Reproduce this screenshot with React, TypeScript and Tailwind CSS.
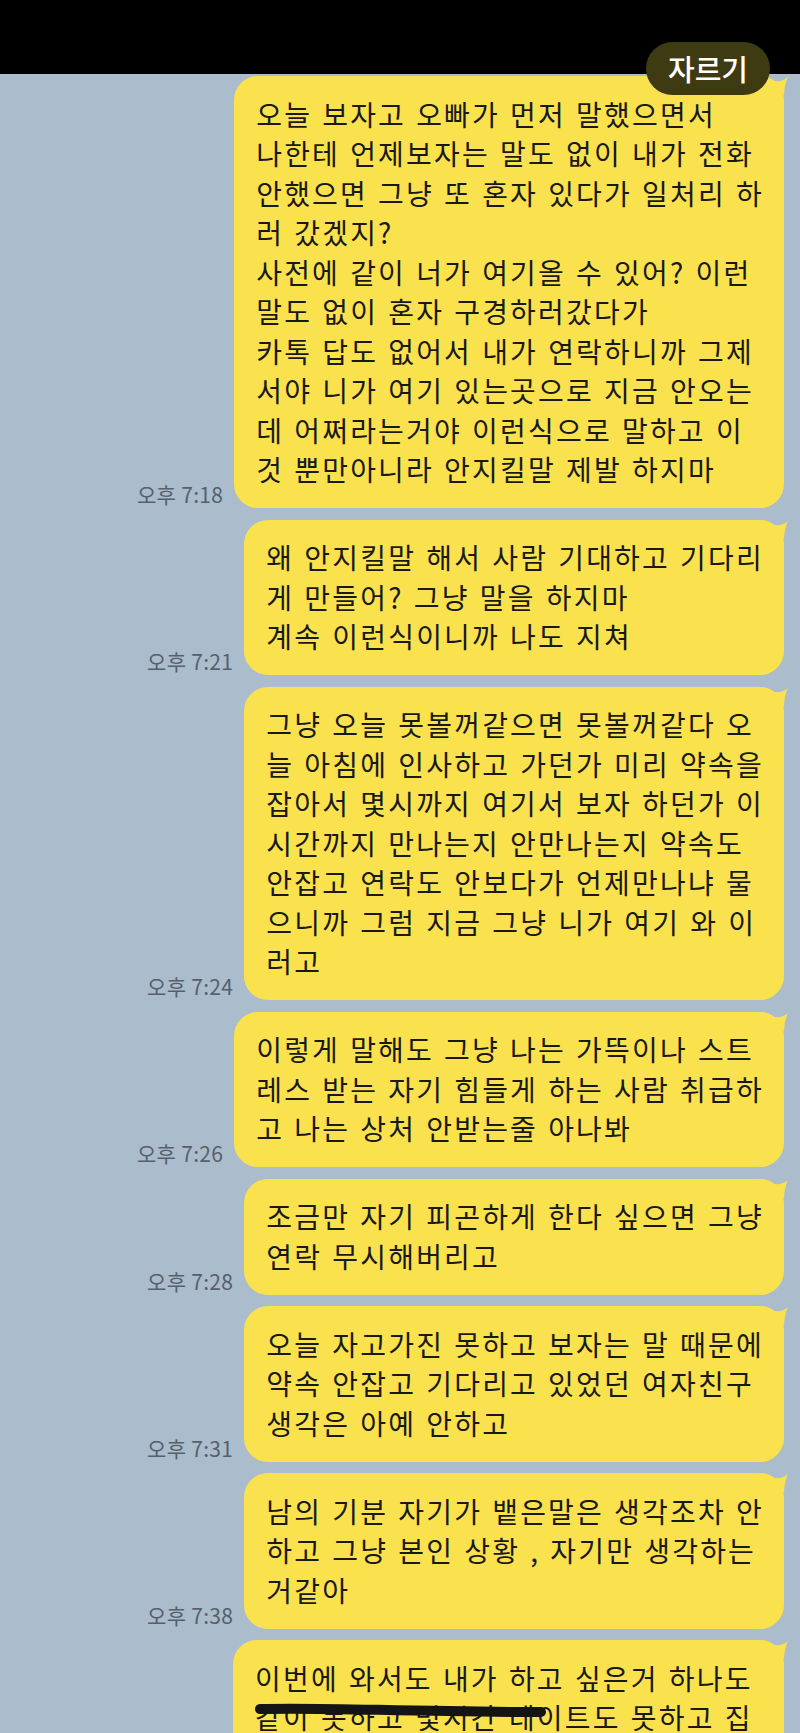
import React from 'react'

type Message = {
  lines: string[]
  time?: string
}

const messages: Message[] = [
  {
    time: '오후 7:18',
    lines: [
      '오늘 보자고 오빠가 먼저 말했으면서',
      '나한테 언제보자는 말도 없이 내가 전화',
      '안했으면 그냥 또 혼자 있다가 일처리 하',
      '러 갔겠지?',
      '사전에 같이 너가 여기올 수 있어? 이런',
      '말도 없이 혼자 구경하러갔다가',
      '카톡 답도 없어서 내가 연락하니까 그제',
      '서야 니가 여기 있는곳으로 지금 안오는',
      '데 어쩌라는거야 이런식으로 말하고 이',
      '것 뿐만아니라 안지킬말 제발 하지마',
    ],
  },
  {
    time: '오후 7:21',
    lines: ['왜 안지킬말 해서 사람 기대하고 기다리', '게 만들어? 그냥 말을 하지마', '계속 이런식이니까 나도 지쳐'],
  },
  {
    time: '오후 7:24',
    lines: [
      '그냥 오늘 못볼꺼같으면 못볼꺼같다 오',
      '늘 아침에 인사하고 가던가 미리 약속을',
      '잡아서 몇시까지 여기서 보자 하던가 이',
      '시간까지 만나는지 안만나는지 약속도',
      '안잡고 연락도 안보다가 언제만나냐 물',
      '으니까 그럼 지금 그냥 니가 여기 와 이',
      '러고',
    ],
  },
  {
    time: '오후 7:26',
    lines: ['이렇게 말해도 그냥 나는 가뜩이나 스트', '레스 받는 자기 힘들게 하는 사람 취급하', '고 나는 상처 안받는줄 아나봐'],
  },
  {
    time: '오후 7:28',
    lines: ['조금만 자기 피곤하게 한다 싶으면 그냥', '연락 무시해버리고'],
  },
  {
    time: '오후 7:31',
    lines: ['오늘 자고가진 못하고 보자는 말 때문에', '약속 안잡고 기다리고 있었던 여자친구', '생각은 아예 안하고'],
  },
  {
    time: '오후 7:38',
    lines: ['남의 기분 자기가 뱉은말은 생각조차 안', '하고 그냥 본인 상황 , 자기만 생각하는', '거같아'],
  },
]

// little hook on the top-right corner of an outgoing bubble
function Tail() {
  return (
    <svg className="absolute top-0 right-[-4px] w-[20px] h-[22px]" viewBox="0 0 20 22">
      <path d="M6 5 Q15 6 20 1 Q16.5 8 16 19 L5 19 Z" fill="#f9e24e" />
    </svg>
  )
}

function Bubble({ lines, className = '', children }: { lines: string[]; className?: string; children?: React.ReactNode }) {
  return (
    <div
      className={`relative bg-[#f9e24e] rounded-[24px] pl-[22px] pr-[20px] py-[18.5px] text-[28px] leading-[39.5px] text-[#191919] tracking-[2.2px] [word-spacing:1.6px] ${className}`}
    >
      <Tail />
      {lines.map((line, i) => (
        <span key={i} className="block whitespace-nowrap">
          {line}
        </span>
      ))}
      {children}
    </div>
  )
}

function Row({ message }: { message: Message }) {
  return (
    <div className="flex justify-end items-end gap-[11px]">
      {message.time && (
        <span className="text-[21px] leading-none tracking-[0.3px] text-[#56606c] mb-[3px] whitespace-nowrap">{message.time}</span>
      )}
      <Bubble lines={message.lines} />
    </div>
  )
}

export default function App() {
  return (
    <div className="relative w-[800px] h-[1733px] overflow-hidden bg-[#abbccd] font-['Noto_Sans_CJK_KR','Noto_Sans',sans-serif]">
      <div className="h-[74px] bg-black" />

      <div className="flex flex-col gap-[11.5px] pt-[2px] pr-[16px]">
        {messages.map((m, i) => (
          <Row key={i} message={m} />
        ))}

        <div className="flex justify-end">
          <Bubble className="w-[551px]" lines={['이번에 와서도 내가 하고 싶은거 하나도', '같이 못하고 몇시간 데이트도 못하고 집']}>
            {/* marker scribble over the second line */}
            <svg className="absolute left-[22px] top-[63px] w-[292px] h-[16px]" viewBox="0 0 292 16">
              <path d="M5 6 C 70 4, 150 9, 286 9" stroke="#141414" strokeWidth="10" strokeLinecap="round" fill="none" />
            </svg>
          </Bubble>
        </div>
      </div>

      <div className="absolute top-[42px] right-[30px] w-[124px] h-[53px] rounded-full bg-[#3e3a12] flex items-center justify-center text-white text-[29px] font-medium">
        자르기
      </div>
    </div>
  )
}
